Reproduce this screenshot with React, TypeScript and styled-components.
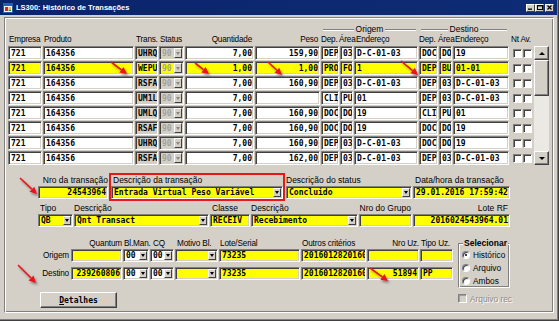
import React from "react";
import styled, { createGlobalStyle } from "styled-components";

const GREY = "#d4d0c8";
const YELLOW = "#ffff00";
const SANS = `"Liberation Sans", Arial, sans-serif`;
const MONO = `"DejaVu Sans Mono", "Liberation Mono", monospace`;
const COLS = "34px 91px 23px 25px 69px 65px 18px 13px 64px 19px 13px 56px 12px 10px";
const QCOLS = "65px 51px 26px 24px 43px 81px 65px 52px 33px";

const GlobalStyle = createGlobalStyle`
  html, body { margin: 0; padding: 0; background: ${GREY}; }
  * { box-sizing: border-box; }
`;

const Window = styled.div`
  position: relative;
  width: 559px;
  height: 321px;
  display: flex;
  flex-direction: column;
  background: ${GREY};
  border-right: 1px solid #404040;
  border-bottom: 1px solid #404040;
  box-shadow: inset -1px -1px 0 #808080;
  font-family: ${SANS};
  overflow: hidden;
`;

const TitleBar = styled.div`
  height: 15px;
  margin-right: 1px;
  display: flex;
  align-items: center;
  padding: 0 3px 0 3px;
  background: linear-gradient(90deg, #0a246a, #0e2c76);
`;

const Title = styled.span`
  margin-left: 3px;
  color: #fff;
  font: bold 7.5px ${SANS};
  white-space: nowrap;
`;

const CaptionButtons = styled.div`
  margin-left: auto;
  display: flex;
`;

const CaptionButton = styled.div<{ $gap?: boolean }>`
  width: 9px;
  height: 8px;
  margin-left: ${(p) => (p.$gap ? "1px" : "0")};
  display: flex;
  align-items: center;
  justify-content: center;
  background: ${GREY};
  border: 1px solid;
  border-color: #fff #404040 #404040 #fff;
`;

const Panel = styled.div`
  width: 550px;
  height: 296px;
  margin: 2px 0 0 4px;
  border: 1px solid;
  border-color: #808080 #fff #fff #808080;
  box-shadow: inset 1px 1px 0 #fff, inset -1px -1px 0 #808080;
  display: flex;
  flex-direction: column;
`;

/* ---------- table ---------- */

const TableArea = styled.div`
  margin: 6px 0 0 3px;
  display: flex;
  align-items: flex-end;
  gap: 1px;
`;

const TableGrid = styled.div`
  display: flex;
  flex-direction: column;
  gap: 1px;
`;

const GridLine = styled.div<{ $h: number }>`
  display: grid;
  grid-template-columns: ${COLS};
  column-gap: 1px;
  height: ${(p) => p.$h}px;
`;

const GroupCaption = styled.div<{ $col: string }>`
  grid-column: ${(p) => p.$col};
  display: flex;
  align-items: center;
  padding: 1px 2px 0;
  font-size: 8.5px;
  line-height: 9px;
  color: #000;

  &::before,
  &::after {
    content: "";
    flex: 1;
    border-top: 1px solid #808080;
    border-bottom: 1px solid #fff;
  }

  & span {
    margin: 0 2px;
  }
`;

const HeadLabel = styled.div<{ $col: string; $right?: boolean; $shift?: number }>`
  grid-column: ${(p) => p.$col};
  align-self: end;
  margin-left: ${(p) => p.$shift ?? 0}px;
  text-align: ${(p) => (p.$right ? "right" : "left")};
  padding: ${(p) => (p.$right ? "0 2px 0 0" : "0 0 0 1px")};
  font-size: 8.2px;
  letter-spacing: -0.2px;
  line-height: 10px;
  white-space: nowrap;
  color: #000;
`;

const Cell = styled.div<{ $bg?: string; $right?: boolean; $dim?: boolean }>`
  display: flex;
  align-items: center;
  justify-content: ${(p) => (p.$right ? "flex-end" : "flex-start")};
  min-width: 0;
  padding: 0 1px 0 2px;
  background: ${(p) => p.$bg ?? "#fff"};
  border: 1px solid;
  border-color: #808080 #fff #fff #808080;
  box-shadow: inset 1px 1px 0 #404040, inset -1px -1px 0 ${GREY};
  color: ${(p) => (p.$dim ? "#a3a09a" : "#000")};
  font: bold 8px ${MONO};
  letter-spacing: 0.02px;
  white-space: nowrap;
  overflow: hidden;
`;

const ComboCell = styled(Cell)`
  padding-right: 0;
`;

const DropBtn = styled.div<{ $disabled?: boolean }>`
  align-self: stretch;
  width: 8px;
  margin: 1px 1px 1px auto;
  flex-shrink: 0;
  display: flex;
  align-items: center;
  justify-content: center;
  background: ${GREY};
  border: 1px solid;
  border-color: #fff #404040 #404040 #fff;

  &::after {
    content: "";
    border-left: 2.5px solid transparent;
    border-right: 2.5px solid transparent;
    border-top: 3px solid ${(p) => (p.$disabled ? "#8a8782" : "#000")};
  }
`;

const CheckCell = styled.div<{ $end?: boolean }>`
  display: flex;
  align-items: center;
  justify-content: ${(p) => (p.$end ? "flex-end" : "flex-start")};
`;

const Check = styled.span<{ $disabled?: boolean }>`
  width: 9px;
  height: 9px;
  flex-shrink: 0;
  background: ${(p) => (p.$disabled ? GREY : "#fff")};
  border: 1px solid;
  border-color: #808080 #fff #fff #808080;
  box-shadow: inset 1px 1px 0 ${(p) => (p.$disabled ? "#a09d98" : "#404040")};
`;

const ScrollBar = styled.div`
  width: 15px;
  height: 119px;
  display: flex;
  flex-direction: column;
  background: #ebe9e4;
`;

const ScrollBtn = styled.div<{ $down?: boolean }>`
  height: 14px;
  display: flex;
  align-items: center;
  justify-content: center;
  background: ${GREY};
  border: 1px solid;
  border-color: #fff #404040 #404040 #fff;
  box-shadow: inset -1px -1px 0 #808080;

  &::after {
    content: "";
    border-left: 3px solid transparent;
    border-right: 3px solid transparent;
    ${(p) => (p.$down ? "border-top: 3px solid #000;" : "border-bottom: 3px solid #000;")}
  }
`;

const Thumb = styled.div`
  height: 36px;
  background: ${GREY};
  border: 1px solid;
  border-color: #fff #404040 #404040 #fff;
  box-shadow: inset -1px -1px 0 #808080;
`;

const Track = styled.div`
  flex: 1;
`;

/* ---------- transaction section ---------- */

const TxnSection = styled.div`
  margin: 8px 0 0 33px;
  display: flex;
  flex-direction: column;
  gap: 2px;
`;

const TxnRow = styled.div`
  display: flex;
  align-items: flex-start;
  gap: 1px;
`;

const FieldGroup = styled.div<{ $w: number; $pt?: number }>`
  width: ${(p) => p.$w}px;
  padding-top: ${(p) => p.$pt ?? 0}px;
  display: flex;
  flex-direction: column;
`;

const Highlight = styled.div`
  width: 176px;
  display: flex;
  flex-direction: column;
  border: 2px solid #e3191b;
`;

const Label = styled.div<{ $right?: boolean; $pad?: number }>`
  height: 11px;
  line-height: 11px;
  font-size: 8.5px;
  color: #000;
  white-space: nowrap;
  text-align: ${(p) => (p.$right ? "right" : "left")};
  padding: ${(p) => (p.$right ? `0 ${p.$pad ?? 0}px 0 0` : `0 0 0 ${p.$pad ?? 1}px`)};
`;

const Box = styled(Cell)`
  height: 13px;
`;

const ComboBox = styled(ComboCell)`
  height: 13px;
`;

/* ---------- bottom section ---------- */

const BottomSection = styled.div`
  margin-top: 11px;
  display: flex;
  align-items: flex-start;
`;

const BottomLeft = styled.div`
  display: flex;
  flex-direction: column;
`;

const QLine = styled.div<{ $h: number; $mt?: number }>`
  display: grid;
  grid-template-columns: ${QCOLS};
  column-gap: 1px;
  height: ${(p) => p.$h}px;
  margin-top: ${(p) => p.$mt ?? 0}px;
`;

const QLabel = styled.div<{ $right?: boolean; $pad?: number }>`
  align-self: center;
  text-align: ${(p) => (p.$right ? "right" : "left")};
  padding: ${(p) => (p.$right ? `0 ${p.$pad ?? 1}px 0 0` : `0 0 0 ${p.$pad ?? 1}px`)};
  font-size: 8.2px;
  letter-spacing: -0.15px;
  line-height: 11px;
  white-space: nowrap;
  color: #000;
`;

const Button = styled.div`
  width: 77px;
  height: 16px;
  margin: 12px 0 0 35px;
  display: flex;
  align-items: center;
  justify-content: center;
  background: ${GREY};
  border: 1px solid;
  border-color: #fff #404040 #404040 #fff;
  box-shadow: inset -1px -1px 0 #808080;
  font: bold 8px ${MONO};
  color: #000;

  & u {
    text-decoration: underline;
  }
`;

const BottomRight = styled.div`
  width: 52px;
  margin-left: 5px;
  display: flex;
  flex-direction: column;
`;

const GroupBox = styled.div`
  margin-top: 5px;
  padding: 0 0 0 3px;
  border: 1px solid;
  border-color: #808080 #fff #fff #808080;
  box-shadow: inset 1px 1px 0 #fff, inset -1px -1px 0 #808080;
  display: flex;
  flex-direction: column;
`;

const GroupTitle = styled.div`
  width: fit-content;
  margin: -6px 0 0 1px;
  padding: 0 1px;
  background: ${GREY};
  font: bold 8.5px ${SANS};
  line-height: 10px;
  color: #000;
`;

const Option = styled.div`
  height: 13px;
  display: flex;
  align-items: center;
  gap: 3px;
  font-size: 8.3px;
  color: #000;
`;

const Radio = styled.span<{ $on?: boolean }>`
  width: 8px;
  height: 8px;
  border-radius: 50%;
  background: #fff;
  border: 1px solid;
  border-color: #808080 #fff #fff #808080;
  box-shadow: inset 1px 1px 0 #404040;
  display: flex;
  align-items: center;
  justify-content: center;

  &::after {
    content: "";
    width: 2px;
    height: 2px;
    border-radius: 50%;
    background: ${(p) => (p.$on ? "#000" : "transparent")};
  }
`;

const ArchiveRow = styled.div`
  height: 11px;
  margin-top: 5px;
  display: flex;
  align-items: center;
  gap: 3px;
  font-size: 8.3px;
  color: #8d8a84;
  text-shadow: 1px 1px 0 #fff;
  white-space: nowrap;
`;

const Overlay = styled.svg`
  position: absolute;
  left: 0;
  top: 0;
  pointer-events: none;
`;

/* ---------- data ---------- */

type Row = {
  trans: string;
  qty: string;
  peso: string;
  o: [string, string, string];
  d: [string, string, string];
  hl?: boolean;
};

const rows: Row[] = [
  { trans: "UHRQ", qty: "7,00", peso: "159,90", o: ["DEP", "03", "D-C-01-03"], d: ["DOC", "DO", "19"] },
  { trans: "WEPU", qty: "1,00", peso: "1,00", o: ["PRO", "FO", "1"], d: ["DEP", "BU", "01-01"], hl: true },
  { trans: "RSFA", qty: "7,00", peso: "160,90", o: ["DEP", "03", "D-C-01-03"], d: ["DEP", "03", "D-C-01-03"] },
  { trans: "UM1L", qty: "7,00", peso: "", o: ["CLI", "PU", "01"], d: ["DEP", "03", "D-C-01-03"] },
  { trans: "UMLQ", qty: "7,00", peso: "160,90", o: ["DOC", "DO", "19"], d: ["CLI", "PU", "01"] },
  { trans: "RSAF", qty: "7,00", peso: "160,90", o: ["DOC", "DO", "19"], d: ["DOC", "DO", "19"] },
  { trans: "UHRQ", qty: "7,00", peso: "160,90", o: ["DEP", "03", "D-C-01-03"], d: ["DOC", "DO", "19"] },
  { trans: "RSFA", qty: "7,00", peso: "162,00", o: ["DEP", "03", "D-C-01-03"], d: ["DEP", "03", "D-C-01-03"] },
];

const heads: { t: string; col: string; right?: boolean; shift?: number }[] = [
  { t: "Empresa", col: "1" },
  { t: "Produto", col: "2" },
  { t: "Trans.", col: "3" },
  { t: "Status", col: "4" },
  { t: "Quantidade", col: "5", right: true },
  { t: "Peso", col: "6", right: true },
  { t: "Dep.", col: "7", shift: -1 },
  { t: "Área", col: "8", shift: -2 },
  { t: "Endereço", col: "9", shift: 1 },
  { t: "Dep.", col: "10", shift: -1 },
  { t: "Área", col: "11", shift: -2 },
  { t: "Endereço", col: "12", shift: 1 },
  { t: "Nt Av.", col: "13 / 15" },
];

const arrows: [number, number, number, number][] = [
  [111, 62, 127, 74],
  [195, 63, 209, 74],
  [268, 62, 282, 75],
  [401, 61, 418, 75],
  [20, 178, 37, 194],
  [18, 265, 36, 283],
  [370, 268, 388, 281],
];

function Arrow({ a }: { a: [number, number, number, number] }) {
  const [x1, y1, x2, y2] = a;
  const dx = x2 - x1;
  const dy = y2 - y1;
  const len = Math.hypot(dx, dy);
  const ux = dx / len;
  const uy = dy / len;
  const bx = x2 - ux * 7;
  const by = y2 - uy * 7;
  const px = -uy * 3.5;
  const py = ux * 3.5;
  return (
    <g>
      <line x1={x1} y1={y1} x2={bx} y2={by} stroke="#e8141b" strokeWidth={1.6} />
      <polygon points={`${x2},${y2} ${bx + px},${by + py} ${bx - px},${by - py}`} fill="#e8141b" />
    </g>
  );
}

function AppIcon() {
  return (
    <svg width="10" height="10" viewBox="0 0 10 10">
      <rect x="0.5" y="0.5" width="9" height="9" fill="#f4f4f4" stroke="#2a5db0" />
      <rect x="1" y="1" width="8" height="2" fill="#2a5db0" />
      <rect x="2" y="4" width="3" height="4" fill="#d8262a" />
      <rect x="5.5" y="4" width="2.5" height="2" fill="#e8c21a" />
      <rect x="5.5" y="6.5" width="2.5" height="1.5" fill="#2f9a3a" />
    </svg>
  );
}

function TableRow({ r }: { r: Row }) {
  const bg = r.hl ? YELLOW : "#fff";
  return (
    <GridLine $h={14}>
      <Cell $bg={bg}>721</Cell>
      <Cell $bg={bg}>164356</Cell>
      <Cell $bg={r.hl ? YELLOW : GREY}>{r.trans}</Cell>
      <ComboCell $bg={r.hl ? YELLOW : GREY} $dim>
        90
        <DropBtn $disabled />
      </ComboCell>
      <Cell $bg={bg} $right>{r.qty}</Cell>
      <Cell $bg={bg} $right>{r.peso}</Cell>
      <Cell $bg={bg}>{r.o[0]}</Cell>
      <Cell $bg={bg}>{r.o[1]}</Cell>
      <Cell $bg={bg}>{r.o[2]}</Cell>
      <Cell $bg={bg}>{r.d[0]}</Cell>
      <Cell $bg={bg}>{r.d[1]}</Cell>
      <Cell $bg={bg}>{r.d[2]}</Cell>
      <CheckCell $end>
        <Check />
      </CheckCell>
      <CheckCell>
        <Check />
      </CheckCell>
    </GridLine>
  );
}

function QuantumRow({ label, quantum, nroUz, tipoUz, mt }: { label: string; quantum: string; nroUz: string; tipoUz: string; mt?: number }) {
  return (
    <QLine $h={13} $mt={mt}>
      <QLabel $right $pad={1}>{label}</QLabel>
      <Cell $bg={YELLOW} $right>{quantum}</Cell>
      <ComboCell>
        00
        <DropBtn />
      </ComboCell>
      <ComboCell>
        00
        <DropBtn />
      </ComboCell>
      <ComboCell $bg={YELLOW}>
        <DropBtn />
      </ComboCell>
      <Cell $bg={YELLOW}>73235</Cell>
      <Cell $bg={YELLOW}>2016012820160</Cell>
      <Cell $bg={YELLOW} $right>{nroUz}</Cell>
      <Cell $bg={YELLOW}>{tipoUz}</Cell>
    </QLine>
  );
}

export default function App() {
  return (
    <>
      <GlobalStyle />
      <Window>
        <TitleBar>
          <AppIcon />
          <Title>LS300: Histórico de Transações</Title>
          <CaptionButtons>
            <CaptionButton>
              <svg width="5" height="5" viewBox="0 0 5 5">
                <rect x="0" y="3.5" width="4" height="1.3" fill="#000" />
              </svg>
            </CaptionButton>
            <CaptionButton>
              <svg width="6" height="5" viewBox="0 0 6 5">
                <rect x="0.5" y="0.5" width="5" height="4" fill="none" stroke="#000" />
                <rect x="0" y="0" width="6" height="1.4" fill="#000" />
              </svg>
            </CaptionButton>
            <CaptionButton $gap>
              <svg width="5" height="5" viewBox="0 0 5 5">
                <path d="M0.5 0.5 L4.5 4.5 M4.5 0.5 L0.5 4.5" stroke="#000" strokeWidth="1.2" />
              </svg>
            </CaptionButton>
          </CaptionButtons>
        </TitleBar>

        <Panel>
          <TableArea>
            <TableGrid>
              <GridLine $h={10}>
                <GroupCaption $col="7 / 10">
                  <span>Origem</span>
                </GroupCaption>
                <GroupCaption $col="10 / 13">
                  <span>Destino</span>
                </GroupCaption>
              </GridLine>
              <GridLine $h={10}>
                {heads.map((h, i) => (
                  <HeadLabel key={i} $col={h.col} $right={h.right} $shift={h.shift}>
                    {h.t}
                  </HeadLabel>
                ))}
              </GridLine>
              {rows.map((r, i) => (
                <TableRow key={i} r={r} />
              ))}
            </TableGrid>
            <ScrollBar>
              <ScrollBtn />
              <Thumb />
              <Track />
              <ScrollBtn $down />
            </ScrollBar>
          </TableArea>

          <TxnSection>
            <TxnRow>
              <FieldGroup $w={70} $pt={2}>
                <Label $right>Nro da transação</Label>
                <Box $bg={YELLOW} $right>24543964</Box>
              </FieldGroup>
              <Highlight>
                <Label $pad={2}>Descrição da transação</Label>
                <ComboBox $bg={YELLOW}>
                  Entrada Virtual Peso Variável
                  <DropBtn />
                </ComboBox>
              </Highlight>
              <FieldGroup $w={126} $pt={2}>
                <Label $pad={0}>Descrição do status</Label>
                <ComboBox $bg={YELLOW}>
                  Concluido
                  <DropBtn />
                </ComboBox>
              </FieldGroup>
              <FieldGroup $w={97} $pt={2}>
                <Label $pad={2}>Data/hora da transação</Label>
                <Box $bg={YELLOW}>29.01.2016 17:59:42</Box>
              </FieldGroup>
            </TxnRow>
            <TxnRow>
              <FieldGroup $w={35}>
                <Label $pad={2}>Tipo</Label>
                <ComboBox $bg={YELLOW}>
                  QB
                  <DropBtn />
                </ComboBox>
              </FieldGroup>
              <FieldGroup $w={135}>
                <Label $pad={0}>Descrição</Label>
                <ComboBox $bg={YELLOW}>
                  Qnt Transact
                  <DropBtn />
                </ComboBox>
              </FieldGroup>
              <FieldGroup $w={40}>
                <Label $pad={2}>Classe</Label>
                <Box $bg={YELLOW}>RECEIV</Box>
              </FieldGroup>
              <FieldGroup $w={107}>
                <Label $pad={0}>Descrição</Label>
                <ComboBox $bg={YELLOW}>
                  Recebimento
                  <DropBtn />
                </ComboBox>
              </FieldGroup>
              <FieldGroup $w={53}>
                <Label $right $pad={1}>Nro do Grupo</Label>
                <Box $bg={YELLOW} />
              </FieldGroup>
              <FieldGroup $w={97}>
                <Label $right $pad={2}>Lote RF</Label>
                <Box $bg={YELLOW} $right>2016024543964.01</Box>
              </FieldGroup>
            </TxnRow>
          </TxnSection>

          <BottomSection>
            <BottomLeft>
              <QLine $h={11}>
                <span />
                <QLabel $right $pad={0}>Quantum</QLabel>
                <QLabel>Bl.Man.</QLabel>
                <QLabel $pad={3}>CQ</QLabel>
                <QLabel $pad={2}>Motivo Bl.</QLabel>
                <QLabel>Lote/Serial</QLabel>
                <QLabel>Outros critérios</QLabel>
                <QLabel $right $pad={0}>Nro Uz.</QLabel>
                <QLabel>Tipo Uz.</QLabel>
              </QLine>
              <QuantumRow label="Origem" quantum="" nroUz="" tipoUz="" />
              <QuantumRow label="Destino" quantum="239260806" nroUz="51894" tipoUz="PP" mt={5} />
              <Button>
                <span>
                  <u>D</u>etalhes
                </span>
              </Button>
            </BottomLeft>
            <BottomRight>
              <GroupBox>
                <GroupTitle>Selecionar</GroupTitle>
                <Option>
                  <Radio $on />
                  Histórico
                </Option>
                <Option>
                  <Radio />
                  Arquivo
                </Option>
                <Option>
                  <Radio />
                  Ambos
                </Option>
              </GroupBox>
              <ArchiveRow>
                <Check $disabled />
                Arquivo rec
              </ArchiveRow>
            </BottomRight>
          </BottomSection>
        </Panel>

        <Overlay width="559" height="321" viewBox="0 0 559 321">
          <defs>
            <filter id="shadow" x="-50%" y="-50%" width="200%" height="200%">
              <feDropShadow dx="1.5" dy="2" stdDeviation="1" floodColor="#000" floodOpacity="0.4" />
            </filter>
          </defs>
          <g filter="url(#shadow)">
            {arrows.map((a, i) => (
              <Arrow key={i} a={a} />
            ))}
          </g>
        </Overlay>
      </Window>
    </>
  );
}
